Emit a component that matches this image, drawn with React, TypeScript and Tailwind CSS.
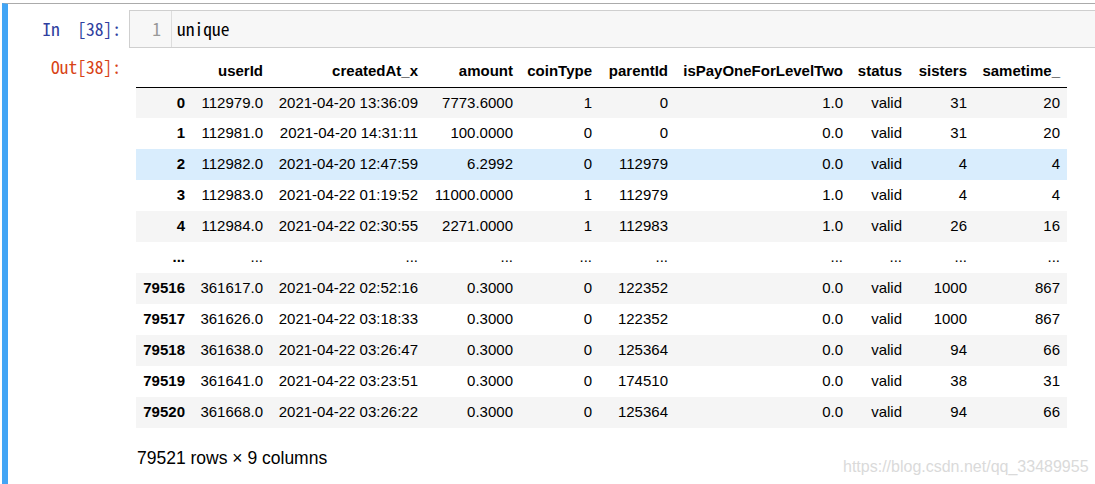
import React from 'react';

const columns = [
  'userId',
  'createdAt_x',
  'amount',
  'coinType',
  'parentId',
  'isPayOneForLevelTwo',
  'status',
  'sisters',
  'sametime_',
];

const colWidths = [
  'w-[56px]',
  'w-[78px]',
  'w-[155px]',
  'w-[95px]',
  'w-[79px]',
  'w-[76px]',
  'w-[175px]',
  'w-[59px]',
  'w-[65px]',
  'w-[93px]',
];

const rows: string[][] = [
  ['0', '112979.0', '2021-04-20 13:36:09', '7773.6000', '1', '0', '1.0', 'valid', '31', '20'],
  ['1', '112981.0', '2021-04-20 14:31:11', '100.0000', '0', '0', '0.0', 'valid', '31', '20'],
  ['2', '112982.0', '2021-04-20 12:47:59', '6.2992', '0', '112979', '0.0', 'valid', '4', '4'],
  ['3', '112983.0', '2021-04-22 01:19:52', '11000.0000', '1', '112979', '1.0', 'valid', '4', '4'],
  ['4', '112984.0', '2021-04-22 02:30:55', '2271.0000', '1', '112983', '1.0', 'valid', '26', '16'],
  ['...', '...', '...', '...', '...', '...', '...', '...', '...', '...'],
  ['79516', '361617.0', '2021-04-22 02:52:16', '0.3000', '0', '122352', '0.0', 'valid', '1000', '867'],
  ['79517', '361626.0', '2021-04-22 03:18:33', '0.3000', '0', '122352', '0.0', 'valid', '1000', '867'],
  ['79518', '361638.0', '2021-04-22 03:26:47', '0.3000', '0', '125364', '0.0', 'valid', '94', '66'],
  ['79519', '361641.0', '2021-04-22 03:23:51', '0.3000', '0', '174510', '0.0', 'valid', '38', '31'],
  ['79520', '361668.0', '2021-04-22 03:26:22', '0.3000', '0', '125364', '0.0', 'valid', '94', '66'],
];

// row under the mouse in the screenshot
const hoveredRow = 2;

const mono = "font-['Noto_Sans_Mono_CJK_SC','Liberation_Mono',monospace]";

export default function App() {
  return (
    <div className="relative h-[484px] w-full overflow-hidden bg-white pl-[2px] pt-[3px]">
      <div className="min-h-[481px] w-[1110px] border-t border-l-[6px] border-t-[#ababab] border-l-[#42a5f5] pt-[6px]">
        {/* input cell */}
        <div className="flex">
          <div className={`w-[113px] pt-[9px] text-right text-[17.5px] leading-[20px] text-[#303f9f] ${mono}`}>
            In&nbsp;&nbsp;[38]:
          </div>
          <div className="ml-[8px] flex h-[38px] flex-1 border border-[#cfcfcf] bg-[#f7f7f7]">
            <div className={`w-[42px] border-r border-[#dddddd] pr-[10px] pt-[8px] text-right text-[17.5px] leading-[20px] text-[#999999] ${mono}`}>
              1
            </div>
            <div className={`pl-[5px] pt-[8px] text-[17.5px] leading-[20px] text-black ${mono}`}>
              unique
            </div>
          </div>
        </div>

        {/* output cell */}
        <div className="flex pt-[8px]">
          <div className={`w-[113px] pt-[1px] text-right text-[17.5px] leading-[20px] text-[#d84315] ${mono}`}>
            Out[38]:
          </div>
          <div className="ml-[15px] font-['Liberation_Sans',Arial,sans-serif] text-black">
            <table className="w-[931px] table-fixed border-collapse text-[15px]">
              <colgroup>
                {colWidths.map((w, i) => (
                  <col key={i} className={w} />
                ))}
              </colgroup>
              <thead>
                <tr className="h-[31px] border-b border-black">
                  <th className="px-[7px] py-0" />
                  {columns.map((c) => (
                    <th key={c} className="whitespace-nowrap px-[7px] py-0 text-right font-bold">
                      {c}
                    </th>
                  ))}
                </tr>
              </thead>
              <tbody>
                {rows.map((r, i) => (
                  <tr
                    key={i}
                    className={i === hoveredRow ? 'bg-[#d9edfd]' : 'odd:bg-[#f5f5f5]'}
                  >
                    {r.map((v, j) =>
                      j === 0 ? (
                        <th key={j} className="h-[31px] whitespace-nowrap px-[7px] py-0 text-right font-bold">
                          {v}
                        </th>
                      ) : (
                        <td key={j} className="h-[31px] whitespace-nowrap px-[7px] py-0 text-right">
                          {v}
                        </td>
                      )
                    )}
                  </tr>
                ))}
              </tbody>
            </table>
            <p className="mt-[17px] pl-[1px] text-[17.5px]">79521 rows × 9 columns</p>
          </div>
        </div>
      </div>

      <div className="absolute left-[843px] top-[455px] font-['Liberation_Sans',Arial,sans-serif] text-[16px] text-[#dadada]">
        https://blog.csdn.net/qq_33489955
      </div>
    </div>
  );
}
